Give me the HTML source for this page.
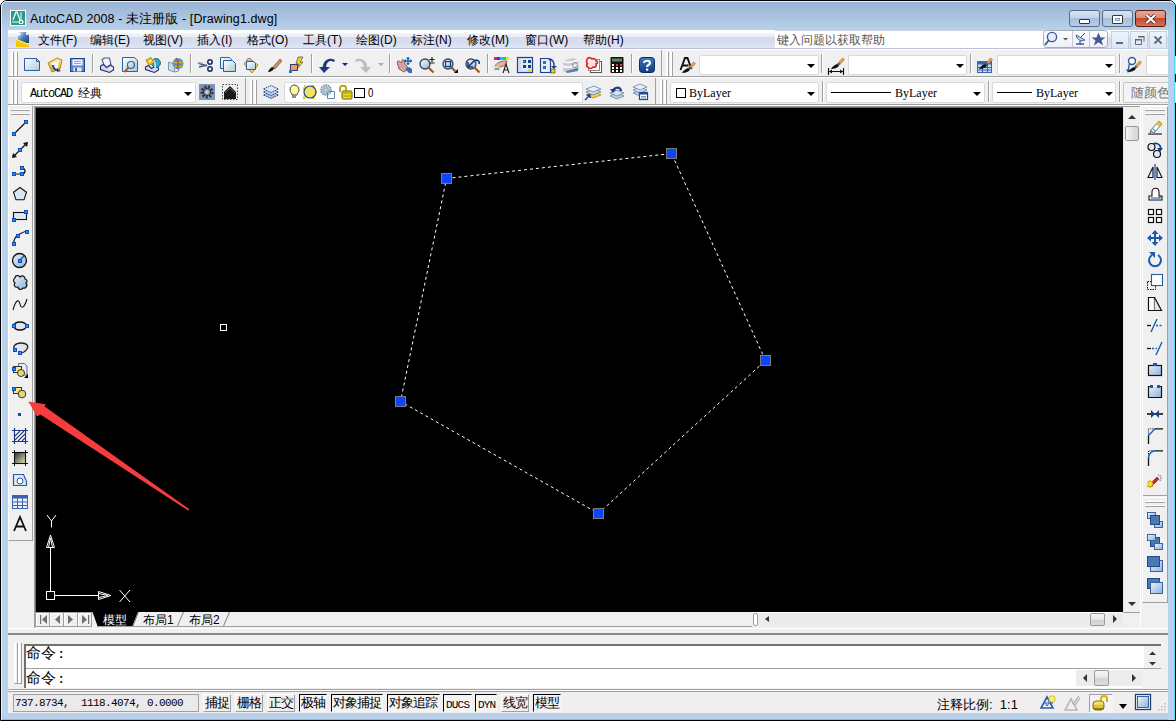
<!DOCTYPE html>
<html><head><meta charset="utf-8">
<style>
*{margin:0;padding:0;box-sizing:border-box}
html,body{width:1176px;height:721px;overflow:hidden;background:#fff}
body{position:relative;font-family:"Liberation Sans",sans-serif;font-size:12px;color:#000}
.a{position:absolute}
svg{position:absolute;overflow:visible}
#frame{left:0;top:0;width:1176px;height:721px;background:#b9d1ea;border:1px solid #000;border-radius:7px 7px 0 0}
#frame2{left:1px;top:1px;width:1174px;height:719px;border:1px solid #eaf2fb;border-right-color:#48d8f8;border-bottom-color:#48d8f8;border-radius:6px 6px 0 0}
#title{left:2px;top:2px;width:1172px;height:28px;border-radius:5px 5px 0 0;background:linear-gradient(#98b4d4,#b9d1ea)}
#client{left:8px;top:30px;width:1160px;height:683px;background:#f0f0f0}
#menubar{left:8px;top:30px;width:1160px;height:19px;background:linear-gradient(#fff 0,#fdfdfe 3px,#eef0f8 4px,#eef0f8 7px,#d6dcee 7px,#d8deef 13px,#e0e6f5 18px);border-bottom:1px solid #b9c0d8}
.ttl{left:30px;top:11px;font-size:12.5px;color:#000;white-space:pre;letter-spacing:0.1px}
.mi{top:32px;font-size:12px;white-space:pre}
.cap{top:10px;height:17px;border:1px solid #5a6d8a;border-radius:3px;background:linear-gradient(#d6e3f2 0,#c4d5ea 45%,#a9bfdb 50%,#b8cce6 100%)}
.mdi{top:30px;width:18px;height:18px;border:1px solid #b6c8de;background:linear-gradient(#f2f6fb,#dde7f3)}
.tb{background:#f0f0f0}
.sepv{width:2px;border-left:1px solid #a0a0a0;border-right:1px solid #fff}
.grip{width:6px;border-left:1px solid #a0a0a0;border-right:1px solid #a0a0a0}
.combo{background:#fff;border:1px solid #d9d9d9;border-radius:2px}
.arr{width:0;height:0;border-left:4px solid transparent;border-right:4px solid transparent;border-top:4px solid #000}
.mono{font-family:"Liberation Mono",monospace}
#canvas{left:36px;top:108px;width:1087px;height:504px;background:#000}
.sb{font-size:13px;letter-spacing:-1px;white-space:pre;top:694px;height:18px;padding:0 0 0 1px;overflow:hidden;line-height:16px;background:#f4f4f4}
.up{border-top:1px solid #fff;border-left:1px solid #fff;border-right:1px solid #a0a0a0;border-bottom:1px solid #a0a0a0;background:#f0eeee!important}
.dn{border-top:1px solid #000;border-left:1px solid #000;border-right:1px solid #f4f4f4;border-bottom:1px solid #f4f4f4}
</style></head><body>
<div class="a" id="frame"></div>
<div class="a" id="frame2"></div>
<div class="a" id="title"></div>
<div class="a" id="client"></div>

<!-- title -->
<svg style="left:10px;top:10px" width="16" height="16" viewBox="0 0 16 16">
<rect x="0" y="0" width="16" height="16" fill="#fff"/><rect x="1" y="1" width="14" height="14" fill="#2a9a88"/>
<path d="M3 10L6 2h1l3 8" stroke="#e8f8f4" stroke-width="1.4" fill="none"/><path d="M2 12h12M11 2v12" stroke="#fff" stroke-width="1"/>
<rect x="9.5" y="10.5" width="3" height="3" fill="#2a9a88" stroke="#fff"/></svg>
<div class="a ttl">AutoCAD 2008 - 未注册版 - [Drawing1.dwg]</div>
<div class="a cap" style="left:1069px;width:31px"><div class="a" style="left:9px;top:8px;width:11px;height:5px;background:#fff;border:1px solid #333;border-radius:1px"></div></div>
<div class="a cap" style="left:1102px;width:31px"><div class="a" style="left:9px;top:4px;width:11px;height:9px;background:#fff;border:1px solid #333;border-radius:1px"><div class="a" style="left:2px;top:2px;width:5px;height:3px;border:1px solid #7da2ce;background:#cbdcf0"></div></div></div>
<div class="a cap" style="left:1135px;width:31px;border-color:#5c1a1a;background:linear-gradient(#e8a598 0,#d98a78 45%,#c44a2c 50%,#d0735a 100%)"><svg style="left:9px;top:3px" width="12" height="10" viewBox="0 0 12 10"><path d="M1.5 1l8.5 8M10 1L1.5 9" stroke="#4a1a14" stroke-width="3.6"/><path d="M1.5 1l8.5 8M10 1L1.5 9" stroke="#fff" stroke-width="2.2"/></svg></div>

<!-- menubar -->
<div class="a" id="menubar"></div>
<svg style="left:15px;top:31px" width="16" height="16" viewBox="0 0 16 16">
<defs><linearGradient id="gMi" x1="0" y1="0" x2="1" y2="1"><stop offset="0" stop-color="#d6e4f4"/><stop offset="0.5" stop-color="#4a7ab8"/><stop offset="1" stop-color="#1a3a70"/></linearGradient></defs>
<path d="M3 1h8l3 3v8H3z" fill="url(#gMi)"/><path d="M11 1l3 3h-3z" fill="#e8eef8"/>
<path d="M1 8l13 5v3H1z" fill="#f5c800"/><path d="M1 8l13 5v1L1 9z" fill="#fff3a0"/>
<circle cx="4" cy="3" r="1.6" fill="#fff"/></svg>
<div class="a mi" style="left:38px">文件(F)</div>
<div class="a mi" style="left:90px">编辑(E)</div>
<div class="a mi" style="left:143px">视图(V)</div>
<div class="a mi" style="left:197px">插入(I)</div>
<div class="a mi" style="left:247px">格式(O)</div>
<div class="a mi" style="left:303px">工具(T)</div>
<div class="a mi" style="left:356px">绘图(D)</div>
<div class="a mi" style="left:411px">标注(N)</div>
<div class="a mi" style="left:467px">修改(M)</div>
<div class="a mi" style="left:525px">窗口(W)</div>
<div class="a mi" style="left:583px">帮助(H)</div>
<!-- help box -->
<div class="a" style="left:775px;top:30px;width:270px;height:18px;background:#fff;border-top:1px solid #c9d3e4"></div>
<div class="a mi" style="left:777px;top:32px;color:#555;font-size:12px">键入问题以获取帮助</div>
<svg style="left:1043px;top:30px" width="124" height="19" viewBox="0 0 124 19">
<defs><linearGradient id="gHb" x1="0" y1="0" x2="0" y2="1"><stop offset="0" stop-color="#fdfdfe"/><stop offset="1" stop-color="#eef0f5"/></linearGradient>
<linearGradient id="gMdi" x1="0" y1="0" x2="0" y2="1"><stop offset="0" stop-color="#eef4fb"/><stop offset="1" stop-color="#dce6f2"/></linearGradient></defs>
<rect x="0.5" y="0.5" width="64" height="17" rx="3" fill="url(#gHb)" stroke="#a6acb6"/>
<path d="M29.5 1v16M46.5 1v16" stroke="#c4c8d0"/>
<circle cx="9" cy="7" r="4.6" fill="#e8eef8" stroke="#3a5aa0" stroke-width="1.4"/><path d="M6 10l-4 5" stroke="#3a5aa0" stroke-width="2"/>
<path d="M20 8h5l-2.5 2.5z" fill="#555"/>
<path d="M33 14h8M37 14v-3" stroke="#3a5aa0" stroke-width="1.3"/><path d="M33 5c1 5 5 7 9 5z" fill="#c8d6ea" stroke="#3a5aa0" stroke-width="1"/><path d="M38 7l4-4" stroke="#3a5aa0"/>
<path d="M55.5 2.5l2 5h5l-4 3 1.6 5-4.6-3.2-4.6 3.2 1.6-5-4-3h5z" fill="#3f5a96"/>
<rect x="68.5" y="1.5" width="17" height="17" fill="url(#gMdi)" stroke="#c0d0e2"/>
<rect x="87.5" y="1.5" width="17" height="17" fill="url(#gMdi)" stroke="#c0d0e2"/>
<rect x="106.5" y="1.5" width="17" height="17" fill="url(#gMdi)" stroke="#c0d0e2"/>
<rect x="73" y="12" width="7" height="2" fill="#606a78"/>
<path d="M92.5 9.5h6v5h-6z" fill="none" stroke="#606a78"/><path d="M92 9h7v1.5h-7z" fill="#606a78"/><path d="M95 6.5h6v5" fill="none" stroke="#606a78"/><path d="M95 6h6.5v1.5H95z" fill="#606a78"/>
<path d="M111.5 6.5l7 7M118.5 6.5l-7 7" stroke="#606a78" stroke-width="1.8"/>
</svg>
<!-- toolbar rows -->
<div class="a" style="left:8px;top:49px;width:1160px;height:1px;background:#fff"></div>
<div class="a" style="left:8px;top:76px;width:1160px;height:1px;background:#a0a0a0"></div>
<div class="a" style="left:8px;top:77px;width:1160px;height:1px;background:#fff"></div>
<div class="a" style="left:8px;top:104px;width:1160px;height:1px;background:#a0a0a0"></div>
<div class="a" style="left:8px;top:105px;width:1160px;height:1px;background:#fff"></div>
<!-- row1 grips/separators -->
<svg style="left:11px;top:52px" width="8" height="24"><path d="M0.5 0v24M1.5 0v24M4.5 0v24M5.5 0v24" stroke="#fff"/><path d="M2.5 0v24M6.5 0v24" stroke="#a0a0a0"/></svg>
<div class="a sepv" style="left:92px;top:54px;height:19px"></div>
<div class="a sepv" style="left:190px;top:54px;height:19px"></div>
<div class="a sepv" style="left:311px;top:54px;height:19px"></div>
<div class="a sepv" style="left:389px;top:54px;height:19px"></div>
<div class="a sepv" style="left:487px;top:54px;height:19px"></div>
<div class="a sepv" style="left:631px;top:54px;height:19px"></div>
<div class="a" style="left:661px;top:50px;width:1px;height:26px;background:#a0a0a0"></div>
<svg style="left:666px;top:52px" width="8" height="24"><path d="M0.5 0v24M1.5 0v24M4.5 0v24M5.5 0v24" stroke="#fff"/><path d="M2.5 0v24M6.5 0v24" stroke="#a0a0a0"/></svg>
<div class="a combo" style="left:699px;top:55px;width:120px;height:20px"></div><div class="a arr" style="left:807px;top:64px"></div>
<div class="a sepv" style="left:821px;top:54px;height:19px"></div>
<div class="a combo" style="left:848px;top:55px;width:119px;height:20px"></div><div class="a arr" style="left:956px;top:64px"></div>
<div class="a sepv" style="left:970px;top:54px;height:19px"></div>
<div class="a combo" style="left:997px;top:55px;width:119px;height:20px"></div><div class="a arr" style="left:1105px;top:64px"></div>
<div class="a sepv" style="left:1119px;top:54px;height:19px"></div>
<div class="a combo" style="left:1146px;top:55px;width:30px;height:20px"></div>

<!-- row2 -->
<svg style="left:11px;top:80px" width="8" height="24"><path d="M0.5 0v24M1.5 0v24M4.5 0v24M5.5 0v24" stroke="#fff"/><path d="M2.5 0v24M6.5 0v24" stroke="#a0a0a0"/></svg>
<div class="a combo" style="left:21px;top:82px;width:175px;height:21px"></div>
<div class="a mono" style="left:30px;top:85px;font-size:12px;white-space:pre;letter-spacing:-1.2px">AutoCAD <span style="letter-spacing:0;font-family:'Liberation Sans'">经典</span></div>
<div class="a arr" style="left:184px;top:92px"></div>
<div class="a" style="left:245px;top:78px;width:1px;height:26px;background:#a0a0a0"></div>
<svg style="left:250px;top:80px" width="8" height="24"><path d="M0.5 0v24M1.5 0v24M4.5 0v24M5.5 0v24" stroke="#fff"/><path d="M2.5 0v24M6.5 0v24" stroke="#a0a0a0"/></svg>
<div class="a combo" style="left:284px;top:82px;width:299px;height:21px"></div>
<div class="a arr" style="left:571px;top:92px"></div>
<div class="a" style="left:655px;top:78px;width:1px;height:26px;background:#a0a0a0"></div>
<svg style="left:660px;top:80px" width="8" height="24"><path d="M0.5 0v24M1.5 0v24M4.5 0v24M5.5 0v24" stroke="#fff"/><path d="M2.5 0v24M6.5 0v24" stroke="#a0a0a0"/></svg>
<div class="a combo" style="left:670px;top:82px;width:149px;height:21px"></div>
<div class="a" style="left:676px;top:88px;width:10px;height:10px;border:1px solid #000;background:#fff"></div>
<div class="a" style="left:689px;top:86px;font-family:'Liberation Serif',serif;font-size:12px;white-space:pre">ByLayer</div>
<div class="a arr" style="left:807px;top:92px"></div>
<div class="a sepv" style="left:822px;top:81px;height:21px"></div>
<div class="a combo" style="left:826px;top:82px;width:159px;height:21px"></div>
<div class="a" style="left:831px;top:92px;width:60px;height:1px;background:#000"></div>
<div class="a" style="left:895px;top:86px;font-family:'Liberation Serif',serif;font-size:12px;white-space:pre">ByLayer</div>
<div class="a arr" style="left:973px;top:92px"></div>
<div class="a sepv" style="left:988px;top:81px;height:21px"></div>
<div class="a combo" style="left:992px;top:82px;width:124px;height:21px"></div>
<div class="a" style="left:997px;top:92px;width:35px;height:1px;background:#000"></div>
<div class="a" style="left:1036px;top:86px;font-family:'Liberation Serif',serif;font-size:12px;white-space:pre">ByLayer</div>
<div class="a arr" style="left:1105px;top:92px"></div>
<div class="a sepv" style="left:1119px;top:81px;height:21px"></div>
<div class="a" style="left:1123px;top:82px;width:55px;height:21px;background:#f4f4f4;border:1px solid #c8c8c8;border-radius:2px"></div>
<div class="a" style="left:1131px;top:84px;font-size:13px;color:#777;white-space:pre">随颜色</div>

<div class="a" style="left:1168px;top:30px;width:7px;height:690px;background:#b9d1ea;border-right:1px solid #48d8f8"></div>
<!-- canvas border -->
<div class="a" style="left:34px;top:106px;width:1106px;height:1px;background:#a0a0a0"></div>
<div class="a" style="left:35px;top:107px;width:1105px;height:1px;background:#696969"></div>
<div class="a" id="canvas"></div>

<!-- left toolbar -->
<div class="a" style="left:8px;top:105px;width:25px;height:436px;background:#f0f0f0;border-right:1px solid #a0a0a0;border-bottom:1px solid #a0a0a0;border-left:1px solid #fff;border-top:1px solid #fff"></div>
<svg style="left:11px;top:108px" width="20" height="8"><path d="M0 2.5h19M0 6.5h19" stroke="#a0a0a0"/><path d="M0 1.5h19M19.5 1v2M0 5.5h19M19.5 5v2" stroke="#fff"/></svg>
<div class="a" style="left:34px;top:106px;width:1px;height:522px;background:#a0a0a0"></div><div class="a" style="left:35px;top:107px;width:1px;height:520px;background:#696969"></div>

<!-- vscroll -->
<div class="a" style="left:1123px;top:107px;width:17px;height:505px;background:#f0f0f0;border-left:1px solid #e3e3e3"></div>
<div class="a" style="left:1128px;top:115px;width:0;height:0;border-left:4px solid transparent;border-right:4px solid transparent;border-bottom:4px solid #333"></div>
<div class="a" style="left:1125px;top:126px;width:14px;height:15px;border:1px solid #999;border-radius:2px;background:linear-gradient(90deg,#f6f6f6,#e2e2e2 50%,#d4d4d4)"></div>
<div class="a" style="left:1128px;top:602px;width:0;height:0;border-left:4px solid transparent;border-right:4px solid transparent;border-top:4px solid #333"></div>
<div class="a" style="left:1123px;top:612px;width:17px;height:1px;background:#a0a0a0"></div>
<div class="a" style="left:1140px;top:106px;width:1px;height:522px;background:#fff"></div>
<div class="a" style="left:1123px;top:627px;width:17px;height:1px;background:#fff"></div>

<!-- right toolbar -->
<div class="a" style="left:1142px;top:106px;width:26px;height:497px;background:#f0f0f0;border-left:1px solid #fff;border-top:1px solid #fff;border-right:1px solid #a0a0a0;border-bottom:1px solid #a0a0a0"></div>
<svg style="left:1145px;top:108px" width="21" height="8"><path d="M0 2.5h20M0 6.5h20" stroke="#a0a0a0"/><path d="M0 1.5h20M0 5.5h20" stroke="#fff"/></svg>
<div class="a" style="left:1143px;top:495px;width:24px;height:1px;background:#a0a0a0"></div><div class="a" style="left:1143px;top:497px;width:24px;height:1px;background:#fff"></div>
<svg style="left:1145px;top:500px" width="21" height="8"><path d="M0 2.5h20M0 6.5h20" stroke="#a0a0a0"/><path d="M0 1.5h20M0 5.5h20" stroke="#fff"/></svg>

<!-- tab row -->
<div class="a" style="left:35px;top:612px;width:1105px;height:16px;background:#f0f0f0"></div><div class="a" style="left:97px;top:626px;width:655px;height:1px;background:#a0a0a0"></div>
<div class="a" style="left:752px;top:612px;width:371px;height:1px;background:#fff"></div><div class="a" style="left:758px;top:613px;width:365px;height:13px;background:#ebebeb"></div><div class="a" style="left:753px;top:613px;width:5px;height:13px;border:1px solid #9aa0a8;border-radius:2px;background:#fff"></div>
<div class="a" style="left:765px;top:616px;width:0;height:0;border-top:3.5px solid transparent;border-bottom:3.5px solid transparent;border-right:4px solid #333"></div>
<div class="a" style="left:1090px;top:613px;width:15px;height:13px;border:1px solid #999;border-radius:2px;background:linear-gradient(#f6f6f6,#e6e6e6 50%,#d2d2d2 55%,#dadada)"></div>
<div class="a" style="left:1113px;top:615px;width:0;height:0;border-top:4px solid transparent;border-bottom:4px solid transparent;border-left:4px solid #333"></div>

<!-- separator above cmd -->
<div class="a" style="left:8px;top:628px;width:1160px;height:1px;background:#fff"></div>
<div class="a" style="left:8px;top:633px;width:1160px;height:2px;background:#8a8a8a"></div>

<!-- command line -->
<svg style="left:14px;top:643px" width="9" height="41"><path d="M0.5 0v40M1.5 0v40M4.5 0v40M5.5 0v40" stroke="#fff"/><path d="M3.5 0v40M7.5 0v40M0 40.5h8" stroke="#a0a0a0"/></svg>
<div class="a" style="left:24px;top:644px;width:1137px;height:44px;background:#fff;border-left:2px solid #707070;border-top:2px solid #707070"></div>
<div class="a" style="left:26px;top:668px;width:1135px;height:1px;background:#a0a0a0"></div>
<div class="a" style="left:26px;top:644px;font-size:15px;white-space:pre">命令<b style="font-size:13px;margin-left:3px">:</b></div>
<div class="a" style="left:26px;top:669px;font-size:15px;white-space:pre">命令<b style="font-size:13px;margin-left:3px">:</b></div>
<div class="a" style="left:1144px;top:646px;width:17px;height:22px;background:#f0f0f0"></div>
<div class="a" style="left:1076px;top:670px;width:66px;height:16px;background:#ececec"></div>
<div class="a" style="left:1142px;top:669px;width:19px;height:19px;background:#f0f0f0"></div>
<svg style="left:1070px;top:646px" width="91" height="42"><path d="M79 9l3.5-3.5 3.5 3.5z" fill="#333"/><path d="M79 16l3.5 3.5 3.5-3.5z" fill="#333"/><path d="M13 32l4-4v8z" fill="#333"/><path d="M62 28l4 4-4 4z" fill="#333"/></svg>
<div class="a" style="left:1094px;top:670px;width:15px;height:16px;border:1px solid #999;border-radius:2px;background:linear-gradient(#f6f6f6,#e8e8e8 45%,#d4d4d4 55%,#dcdcdc)"></div>
<!-- status bar -->
<div class="a" style="left:8px;top:689px;width:1160px;height:1px;background:#a0a0a0"></div>
<div class="a" style="left:8px;top:690px;width:1160px;height:1px;background:#fff"></div>
<div class="a" style="left:8px;top:691px;width:1160px;height:1px;background:#a0a0a0"></div>
<div class="a" style="left:8px;top:692px;width:1160px;height:21px;background:#f0eeee"></div>
<div class="a" style="left:13px;top:694px;width:186px;height:18px;border:1px solid #a0a0a0;background:#ebe9e9"></div>
<div class="a mono" style="left:15px;top:697px;font-size:11px;white-space:pre;letter-spacing:-0.6px">737.8734,  1118.4074, 0.0000</div>

<!-- canvas drawing -->
<svg style="left:0;top:0" width="1176" height="721" viewBox="0 0 1176 721">
<polygon points="446.5,178.5 671.5,153.5 765.5,360.5 598.5,513.5 400.5,401.5" fill="none" stroke="#fff" stroke-width="1" stroke-dasharray="3 3"/>
<rect x="441.5" y="173.5" width="10" height="10" fill="#0a46ff" stroke="#7a7a7a"/>
<rect x="666.5" y="148.5" width="10" height="10" fill="#0a46ff" stroke="#7a7a7a"/>
<rect x="760.5" y="355.5" width="10" height="10" fill="#0a46ff" stroke="#7a7a7a"/>
<rect x="593.5" y="508.5" width="10" height="10" fill="#0a46ff" stroke="#7a7a7a"/>
<rect x="395.5" y="396.5" width="10" height="10" fill="#0a46ff" stroke="#7a7a7a"/>
<rect x="220.5" y="324.5" width="6" height="6" fill="none" stroke="#fff"/>
<g stroke="#fff" stroke-width="1" fill="none">
<rect x="46.5" y="591.5" width="8" height="8"/>
<path d="M50.5 591V547.5M55 595.5H98.5"/>
<path d="M46.5 547.5h8L50.5 535zM48.5 547.5L50.5 538 52.5 547.5"/>
<path d="M98.5 591.5v8L111 595.5zM98.5 593.5L108 595.5 98.5 597.5"/>
<path d="M47 515l4.5 6 4.5-6M51.5 521v6.5"/>
<path d="M119.5 590l10.5 12M130 590l-10.5 12"/>
</g>
<polygon points="28.3,401.4 45.8,404.2 44.6,406.5 189.4,509.2 188.2,510.6 40.4,414.4 37.2,416.4" fill="#f63c3c"/>
</svg>

<!-- tabs -->
<svg style="left:35px;top:612px" width="200" height="16" viewBox="0 0 200 16">
<g fill="#f0f0f0" stroke="#a0a0a0">
<rect x="0.5" y="0.5" width="14" height="14"/><rect x="14.5" y="0.5" width="14" height="14"/><rect x="28.5" y="0.5" width="14" height="14"/><rect x="42.5" y="0.5" width="14" height="14"/>
</g>
<g fill="none" stroke="#fff"><path d="M1.5 13.5v-12h12M15.5 13.5v-12h12M29.5 13.5v-12h12M43.5 13.5v-12h12"/></g>
<g fill="#707070"><rect x="5" y="3" width="1.2" height="9"/><path d="M12 3v9L7 7.5z"/><path d="M25 3v9L20 7.5z"/><path d="M33 3v9l5-4.5z"/><path d="M47 3v9l5-4.5z"/><rect x="53" y="3" width="1.2" height="9"/></g>
<path d="M57.5 0h45.5l-5.5 14H62.5z" fill="#000"/>
<path d="M98 14l5.5-14M142.5 14l6-14M188.5 14l6-14" stroke="#808080" fill="none"/>

</svg>
<div class="a" style="left:103px;top:612px;font-size:12px;color:#fff;white-space:pre">模型</div>
<div class="a" style="left:143px;top:612px;font-size:12px;white-space:pre">布局1</div>
<div class="a" style="left:189px;top:612px;font-size:12px;white-space:pre">布局2</div>

<!-- status buttons -->
<div class="a sb up" style="left:203px;width:28px">捕捉</div>
<div class="a sb up" style="left:235px;width:28px">栅格</div>
<div class="a sb up" style="left:267px;width:28px">正交</div>
<div class="a sb dn" style="left:299px;width:28px">极轴</div>
<div class="a sb dn" style="left:331px;width:52px">对象捕捉</div>
<div class="a sb dn" style="left:387px;width:53px">对象追踪</div>
<div class="a sb dn mono" style="left:443px;width:29px;font-size:11px;letter-spacing:-0.8px;padding-left:2px;padding-top:2px">DUCS</div>
<div class="a sb dn mono" style="left:475px;width:22px;font-size:11px;letter-spacing:-0.8px;padding-left:2px;padding-top:2px">DYN</div>
<div class="a sb up" style="left:501px;width:28px">线宽</div>
<div class="a sb dn" style="left:533px;width:28px">模型</div>
<div class="a" style="left:937px;top:696px;font-size:13px;white-space:pre">注释比例:  1:1</div>
<svg style="left:1040px;top:693px" width="128" height="20" viewBox="0 0 128 20">
<defs><linearGradient id="gCs" x1="0" y1="0" x2="1" y2="1"><stop offset="0" stop-color="#f0f6fc"/><stop offset="1" stop-color="#8cb0d8"/></linearGradient>
<linearGradient id="gLk" x1="0" y1="0" x2="0" y2="1"><stop offset="0" stop-color="#fff280"/><stop offset="0.5" stop-color="#e0c010"/><stop offset="1" stop-color="#806800"/></linearGradient></defs>
<path d="M7 4l6 11H1z" fill="none" stroke="#2a5ab0" stroke-width="1.6"/><path d="M5 10h4l-2 3z" fill="#fff" stroke="#2a5ab0" stroke-width="1"/>
<circle cx="12" cy="6" r="3.2" fill="#fff070" stroke="#c8a800" stroke-width="0.7"/><rect x="11" y="9" width="2" height="2" fill="#888"/>
<path d="M31 6l6 11h-12z" fill="none" stroke="#b8b8b8" stroke-width="1.6"/><path d="M33 11l6-8M35 12l5-7" stroke="#a8a8a8" stroke-width="1.2"/>
<path d="M49.5 19V1.5H72" fill="none" stroke="#a0a0a0"/><rect x="50" y="2" width="23" height="18" fill="#f4f4f4"/>
<path d="M61 9V6c0-4 6-4 6 0v3" fill="none" stroke="#d8b400" stroke-width="2"/>
<rect x="53" y="8" width="11" height="9" rx="3" fill="url(#gLk)" stroke="#6a5500" stroke-width="0.8"/><path d="M54 11h9M54 14h9" stroke="#fff8a0" stroke-width="0.8"/>
<path d="M79 11h8l-4 5z" fill="#000"/>
<rect x="95.5" y="1.5" width="15" height="15" fill="#fff" stroke="#1a3f7a" stroke-width="1.3"/><rect x="97.5" y="3.5" width="11" height="11" fill="url(#gCs)" stroke="#1a3f7a" stroke-width="0.8"/>
<g fill="#b8b8b8"><rect x="124" y="10" width="1.5" height="1.5"/><rect x="121" y="13" width="1.5" height="1.5"/><rect x="124" y="13" width="1.5" height="1.5"/><rect x="118" y="16" width="1.5" height="1.5"/><rect x="121" y="16" width="1.5" height="1.5"/><rect x="124" y="16" width="1.5" height="1.5"/></g>
</svg>
<!-- layer combo extras -->
<div class="a" style="left:354px;top:88px;width:11px;height:10px;border:1px solid #000;background:#fff"></div>
<div class="a" style="left:368px;top:86px;font-size:12px;transform:scaleX(0.8);transform-origin:left">0</div>
<div class="a" style="left:1123px;top:612px;width:17px;height:1px;background:#a0a0a0"></div>
<svg width="0" height="0" style="position:absolute"><defs>
<linearGradient id="gDoc" x1="0" y1="0" x2="1" y2="1"><stop offset="0" stop-color="#ffffff"/><stop offset="1" stop-color="#a9cbd6"/></linearGradient>
<linearGradient id="gYel" x1="0" y1="0" x2="0" y2="1"><stop offset="0" stop-color="#fde58a"/><stop offset="1" stop-color="#d9a514"/></linearGradient>
<linearGradient id="gBlue" x1="0" y1="0" x2="1" y2="1"><stop offset="0" stop-color="#b9d3ef"/><stop offset="1" stop-color="#3d6fb0"/></linearGradient>
<linearGradient id="gLens" x1="0" y1="0" x2="1" y2="1"><stop offset="0" stop-color="#ffffff"/><stop offset="1" stop-color="#8fb4d6"/></linearGradient>
<linearGradient id="gHelp" x1="0" y1="0" x2="0" y2="1"><stop offset="0" stop-color="#3f78c0"/><stop offset="1" stop-color="#0f3c80"/></linearGradient>
<linearGradient id="gSq" x1="0" y1="0" x2="1" y2="1"><stop offset="0" stop-color="#e9f1fa"/><stop offset="1" stop-color="#8db2d9"/></linearGradient>
<linearGradient id="gDraw" x1="0" y1="0" x2="1" y2="1"><stop offset="0" stop-color="#7aa3d2"/><stop offset="1" stop-color="#2f5d9a"/></linearGradient>
</defs></svg>
<svg style="left:24px;top:57px" width="16" height="16" viewBox="0 0 16 16"><path d="M0.5 1.5h12l3 3v9h-15z" fill="url(#gDoc)" stroke="#2b5ea8"/><path d="M12.5 1.5v3h3" fill="none" stroke="#2b5ea8"/></svg>
<svg style="left:47px;top:57px" width="16" height="16" viewBox="0 0 16 16"><path d="M1 6l9-5 5 2-2 9-8 3z" fill="url(#gYel)" stroke="#b58b1c"/><path d="M4 6l8-3-1 8-5 2z" fill="#eef4fb"/><path d="M6 8c0 3 2 5 5 5" stroke="#1f4b8f" stroke-width="2" fill="none"/><path d="M10 11l4 3-4 1z" fill="#1f4b8f"/></svg>
<svg style="left:70px;top:57px" width="16" height="16" viewBox="0 0 16 16"><rect x="0.5" y="1.5" width="14" height="13" fill="#5a8ad4" stroke="#1f4790"/><rect x="2.5" y="2.5" width="10" height="6" fill="#f4f7fc"/><rect x="4" y="4" width="7" height="1" fill="#8fa8d0"/><rect x="4" y="6" width="7" height="1" fill="#8fa8d0"/><rect x="3.5" y="10.5" width="8" height="4" fill="#e6edf7"/><rect x="5" y="11" width="2" height="3.5" fill="#3a64a8"/></svg>
<svg style="left:100px;top:57px" width="16" height="16" viewBox="0 0 16 16"><path d="M2 2.5l2.5-1.5h5l1.5 7-4 3-3-2.5z" fill="#f2f2fa" stroke="#50508a" stroke-width="1.1"/><path d="M0.5 9l3-1.5 3 3 4-2.5 3 2v3l-4 2.5-9-3z" fill="#d4d8f0" stroke="#2a2a6a" stroke-width="1.1"/><path d="M9 12.5l4-1.5" stroke="#fff"/></svg>
<svg style="left:122px;top:57px" width="16" height="16" viewBox="0 0 16 16"><path d="M0.5 0.5h12l3 3v11h-15z" fill="url(#gDoc)" stroke="#2b5ea8"/><circle cx="9" cy="8" r="3.5" fill="url(#gLens)" stroke="#3d5f8f" stroke-width="1.2"/><path d="M6.5 10.5L2.5 15" stroke="#a0602a" stroke-width="2"/></svg>
<svg style="left:145px;top:57px" width="16" height="16" viewBox="0 0 16 16"><path d="M0.5 10l3-1.5 3 3 4-2.5 3 2v2l-4 2.5-9-3z" fill="#d4d8f0" stroke="#2a2a6a" stroke-width="1.1"/><circle cx="11" cy="6" r="4.5" fill="#3aa0d8" stroke="#1a5a40" stroke-width="0.8"/><path d="M8 3c2 2 3 4 2 8" stroke="#e8f4fa" stroke-width="1.2" fill="none"/><path d="M1 3l5-2.5 3 5-5 3z" fill="#f5c818" stroke="#9a7a00" stroke-width="0.8"/><path d="M4 4l1 1 1-2" stroke="#fff" fill="none"/></svg>
<svg style="left:168px;top:57px" width="16" height="16" viewBox="0 0 16 16"><path d="M0.5 5l6 2v8l-6-2z" fill="#cfdcec" stroke="#7f95b8"/><path d="M6.5 7l4-1v8l-4 1z" fill="#e5edf7" stroke="#7f95b8"/><circle cx="10" cy="6.5" r="5.5" fill="#3aa0d8"/><path d="M5 5c3 1 7 1 10 0M6 10c3-1 6-1 9 0" stroke="#e8b000" stroke-width="1.2" fill="none"/><path d="M8 1c2 3 3 7 1 11" stroke="#d8322a" stroke-width="1.2" fill="none"/></svg>
<svg style="left:197px;top:57px" width="16" height="16" viewBox="0 0 16 16"><path d="M1 6l9 3M2 10l8-2" stroke="#4a5a80" stroke-width="1.5"/><circle cx="13" cy="5" r="2.2" fill="none" stroke="#1a2a60" stroke-width="1.5"/><circle cx="13" cy="12" r="2.2" fill="none" stroke="#1a2a60" stroke-width="1.5"/><path d="M1 6l5 0" stroke="#9aa6c0"/></svg>
<svg style="left:220px;top:57px" width="16" height="16" viewBox="0 0 16 16"><path d="M0.5 0.5h9l2 2v9h-11z" fill="url(#gDoc)" stroke="#2b5ea8"/><path d="M3.5 3.5h9l3 3v8h-12z" fill="url(#gDoc)" stroke="#2b5ea8"/></svg>
<svg style="left:243px;top:57px" width="16" height="16" viewBox="0 0 16 16"><path d="M1 7l5-6 9 7-6 8z" fill="#f3d77a" stroke="#b08a20"/><path d="M4 2h4v2H4z" fill="#fff" stroke="#888"/><path d="M3.5 4.5h7l2 2v6h-9z" fill="url(#gDoc)" stroke="#2b5ea8"/></svg>
<svg style="left:267px;top:57px" width="16" height="16" viewBox="0 0 16 16"><path d="M1 15c1-3 3-5 5-5l1 1c0 2-3 4-6 4z" fill="#1a1a1a"/><path d="M6 10l2 2 7-8-2-2z" fill="#c89060" stroke="#6a4020" stroke-width="0.6"/></svg>
<svg style="left:289px;top:57px" width="16" height="16" viewBox="0 0 16 16"><rect x="1.5" y="7.5" width="7" height="6" fill="#f59a60" stroke="#2a3f7a"/><path d="M9 0h5l-3 5h3l-6 7 2-5h-3z" fill="#f5d020" stroke="#333" stroke-width="0.6"/><rect x="0" y="13" width="3" height="3" fill="#1f6fd8"/></svg>
<svg style="left:319px;top:57px" width="16" height="16" viewBox="0 0 16 16"><path d="M3.8 10.5C3.8 3.5 10 -0.8 16 3.2L15 5C10.5 2.5 7.2 5.5 7.2 10.5z" fill="#1a3a78"/><path d="M0 10h11L5 16z" fill="#1a3a78"/></svg>
<svg style="left:342px;top:63px" width="6" height="3" viewBox="0 0 6 3"><path d="M0 0h6l-3 3z" fill="#10208a"/></svg>
<svg style="left:355px;top:57px" width="16" height="16" viewBox="0 0 16 16"><path d="M12.2 10.5C12.2 3.5 6 -0.8 0 3.2L1 5C5.5 2.5 8.8 5.5 8.8 10.5z" fill="#b8bcc4"/><path d="M16 10H5l6 6z" fill="#b8bcc4"/></svg>
<svg style="left:378px;top:63px" width="6" height="3" viewBox="0 0 6 3"><path d="M0 0h6l-3 3z" fill="#a8a8c0"/></svg>
<svg style="left:396px;top:57px" width="16" height="16" viewBox="0 0 16 16"><path d="M1 5c1-2 3-1 4 1l1-3c1-1 2 0 2 1l1 3 2 2 1 3-4 3-5-3z" fill="#d7a0a0" stroke="#804848" stroke-width="0.8"/><path d="M9 12l4 4h3v-4l-3-2z" fill="#2f6fb8"/><path d="M12 0v8M8 4h8" stroke="#1f5fa8" stroke-width="1.4"/><path d="M12 0l-2 2h4zM12 8l-2-2h4zM8 4l2-2v4zM16 4l-2-2v4z" fill="#1f5fa8"/></svg>
<svg style="left:419px;top:57px" width="16" height="16" viewBox="0 0 16 16"><circle cx="6" cy="7" r="5" fill="url(#gLens)" stroke="#33465c" stroke-width="1.3"/><path d="M9.5 10.5l5 5" stroke="#9a5a1a" stroke-width="2.2"/><path d="M13 0v5M10.5 2.5h5M10.5 6h5" stroke="#1a1a1a" stroke-width="1.1"/></svg>
<svg style="left:442px;top:57px" width="16" height="16" viewBox="0 0 16 16"><circle cx="6" cy="7" r="5" fill="url(#gLens)" stroke="#33465c" stroke-width="1.3"/><path d="M9.5 10.5l4 4" stroke="#9a5a1a" stroke-width="2.2"/><rect x="3.5" y="4.5" width="5" height="5" fill="none" stroke="#1a3a80" stroke-width="1.2"/><path d="M16 12v4h-4z" fill="#000"/></svg>
<svg style="left:465px;top:57px" width="16" height="16" viewBox="0 0 16 16"><circle cx="6" cy="7" r="5" fill="url(#gLens)" stroke="#33465c" stroke-width="1.3"/><path d="M9.5 10.5l5 5" stroke="#9a5a1a" stroke-width="2.2"/><path d="M4 9l5-5M3 5v5h5" stroke="#1a3a80" stroke-width="1.6" fill="none"/><path d="M9 4c3-2 6 0 5 3" stroke="#1a3a80" stroke-width="1.6" fill="none"/></svg>
<svg style="left:494px;top:57px" width="16" height="16" viewBox="0 0 16 16"><rect x="0" y="0" width="3" height="3" fill="#e0206a"/><rect x="3" y="0" width="3" height="3" fill="#6a20e0"/><rect x="6" y="0" width="3" height="3" fill="#20c0e0"/><rect x="9" y="0" width="3" height="3" fill="#20d040"/><rect x="12" y="0" width="3" height="3" fill="#f0e020"/><path d="M1 9c2-4 6-5 12-5l-1 4-5 2z" fill="#e0b0a0" stroke="#905050" stroke-width="0.8"/><rect x="0.5" y="8.5" width="5" height="2" fill="#e8d060"/><rect x="0.5" y="11" width="5" height="2" fill="#70a0d0"/><path d="M9 16l3-9 3 9M10 13h4" stroke="#222" stroke-width="1.1" fill="none"/></svg>
<svg style="left:517px;top:57px" width="16" height="16" viewBox="0 0 16 16"><rect x="0.5" y="0.5" width="15" height="15" fill="#dfeaf8" stroke="#1f3f8a" stroke-width="1.2"/><path d="M3 2v12" stroke="#c8a830" stroke-dasharray="1 1"/><rect x="6" y="3" width="3" height="3" fill="#1a4070"/><rect x="11" y="3" width="3" height="3" fill="#1a4070"/><rect x="6" y="8" width="3" height="3" fill="#1a4070"/><rect x="11" y="8" width="3" height="3" fill="#1a4070"/><rect x="11" y="12" width="3" height="3" fill="#f0d030"/><rect x="6" y="4" width="2" height="1" fill="#5ab"/></svg>
<svg style="left:540px;top:57px" width="16" height="16" viewBox="0 0 16 16"><path d="M0.5 1.5h8l2 2v12h-10z" fill="#e4ecf6" stroke="#1f3f8a" stroke-width="1.1"/><rect x="3" y="4" width="3" height="3" fill="#3a6ab0"/><rect x="3" y="9" width="3" height="3" fill="#3a6ab0"/><path d="M9 2c4 0 5 3 5 7" stroke="#1f3f8a" stroke-width="1.4" fill="none"/><path d="M11 9h6l-3 3z" fill="#1f3f8a"/><rect x="11" y="12" width="4" height="4" fill="#f0d030" stroke="#333" stroke-width="0.6"/></svg>
<svg style="left:563px;top:57px" width="16" height="16" viewBox="0 0 16 16"><path d="M0 4l10-3 6 2v10l-12 3-4-2z" fill="#c8ccd2"/><path d="M0 4c3 2 8 2 16-1M0 9c4 2 10 1 16-2" stroke="#f6f6f6" stroke-width="2" fill="none"/><circle cx="12" cy="8" r="2.5" fill="none" stroke="#8a9098"/><path d="M3 14l12-3v3l-11 2z" fill="#5a7ab0"/></svg>
<svg style="left:586px;top:57px" width="16" height="16" viewBox="0 0 16 16"><rect x="4.5" y="4.5" width="11" height="11" fill="#fff" stroke="#555"/><rect x="2.5" y="2.5" width="11" height="11" fill="#fff" stroke="#888"/><path d="M2 1c2-1 3 0 4 1 2-1 4 0 4 2 2 0 2 3 0 3 1 2-1 4-3 3-1 2-4 2-5 0-2 0-2-3 0-3-2-1-2-4 0-6z" fill="#f8e8e8" stroke="#e02020" stroke-width="1.6"/></svg>
<svg style="left:610px;top:57px" width="16" height="16" viewBox="0 0 16 16"><rect x="0.5" y="0" width="13" height="16" rx="1" fill="#111"/><rect x="2" y="1.5" width="10" height="3" fill="#5a8a5a"/><g fill="#fff"><rect x="2" y="7" width="2" height="2"/><rect x="6" y="7" width="2" height="2" fill="#f33"/><rect x="10" y="7" width="2" height="2" fill="#f33"/><rect x="2" y="10" width="2" height="2"/><rect x="6" y="10" width="2" height="2"/><rect x="10" y="10" width="2" height="2"/><rect x="2" y="13" width="2" height="2"/><rect x="6" y="13" width="2" height="2"/><rect x="10" y="13" width="2" height="2"/></g></svg>
<svg style="left:639px;top:57px" width="16" height="16" viewBox="0 0 16 16"><rect x="0.5" y="0.5" width="15" height="15" rx="3" fill="url(#gHelp)" stroke="#0a2a60"/><path d="M5 6c0-3 6-3 6 0 0 2-3 2-3 4" stroke="#fff" stroke-width="2.2" fill="none"/><rect x="7" y="11.5" width="2.2" height="2.2" fill="#fff"/></svg>
<svg style="left:679px;top:57px" width="16" height="16" viewBox="0 0 16 16"><path d="M1.5 13L6 1h2.5l4 11M3.5 8.5h6" stroke="#111" stroke-width="1.9" fill="none"/><g transform="translate(1 1)"><path d="M9.5 8.5l4-4.5 2 1.5-4 4.5z" fill="#e8a050" stroke="#a06020" stroke-width="0.5"/><path d="M8 10l1.5-1.5 2 1.5-1.5 1.5z" fill="#2a6a6a"/><path d="M2 15c1-2 3-4 6-5l2 1.5c-1 2-4 3.5-8 3.5z" fill="#111"/></g></svg>
<svg style="left:828px;top:57px" width="16" height="16" viewBox="0 0 16 16"><path d="M0 14.5h16M0.5 11v7M15.5 11v7" stroke="#111" stroke-width="1.2"/><path d="M1 14.5l3-2v4zM15 14.5l-3-2v4z" fill="#111"/><g transform="translate(1 -3)"><path d="M9.5 8.5l4-4.5 2 1.5-4 4.5z" fill="#e8a050" stroke="#a06020" stroke-width="0.5"/><path d="M8 10l1.5-1.5 2 1.5-1.5 1.5z" fill="#2a6a6a"/><path d="M2 15c1-2 3-4 6-5l2 1.5c-1 2-4 3.5-8 3.5z" fill="#111"/></g></svg>
<svg style="left:977px;top:57px" width="16" height="16" viewBox="0 0 16 16"><rect x="0.5" y="4.5" width="14" height="11" fill="#c8daf2" stroke="#3a64b0"/><rect x="0.5" y="4.5" width="14" height="3" fill="#3a64b0"/><path d="M0 10.5h15M0 13h15M5.5 7v9M10.5 7v9" stroke="#3a64b0"/><g transform="translate(0 -3)"><path d="M9.5 8.5l4-4.5 2 1.5-4 4.5z" fill="#e8a050" stroke="#a06020" stroke-width="0.5"/><path d="M8 10l1.5-1.5 2 1.5-1.5 1.5z" fill="#2a6a6a"/><path d="M2 15c1-2 3-4 6-5l2 1.5c-1 2-4 3.5-8 3.5z" fill="#111"/></g></svg>
<svg style="left:1126px;top:57px" width="16" height="16" viewBox="0 0 16 16"><circle cx="6" cy="4" r="3.5" fill="#fff" stroke="#2a5aa8" stroke-width="1.4"/><path d="M3.5 6.5L2 14" stroke="#2a5aa8" stroke-width="1.3"/><path d="M0 12.5l2 3.5 2-3.5z" fill="#2a5aa8"/><g transform="translate(0 0)"><path d="M9.5 8.5l4-4.5 2 1.5-4 4.5z" fill="#e8a050" stroke="#a06020" stroke-width="0.5"/><path d="M8 10l1.5-1.5 2 1.5-1.5 1.5z" fill="#2a6a6a"/><path d="M2 15c1-2 3-4 6-5l2 1.5c-1 2-4 3.5-8 3.5z" fill="#111"/></g></svg>
<svg style="left:199px;top:84px" width="16" height="16" viewBox="0 0 16 16"><rect x="0" y="0" width="16" height="16" fill="#7b95b9"/><circle cx="8" cy="8" r="5" fill="none" stroke="#333" stroke-width="3" stroke-dasharray="2 1.4"/><circle cx="8" cy="8" r="3.5" fill="#9aa8b8" stroke="#222"/><circle cx="8" cy="8" r="1.5" fill="#cfd8e2"/></svg>
<svg style="left:222px;top:84px" width="16" height="16" viewBox="0 0 16 16"><rect x="0.5" y="0.5" width="15" height="15" fill="none" stroke="#444" stroke-dasharray="1.5 1.5"/><path d="M2 8l6-6 6 6v7H2z" fill="#1a1a1a"/><path d="M3 9l5-5 5 5" stroke="#888" fill="none" stroke-width="0.6"/></svg>
<svg style="left:263px;top:84px" width="16" height="16" viewBox="0 0 16 16"><path d="M0.5 11l7.5-3.5 7.5 3.5-7.5 3.5z" fill="#a8c0e0" stroke="#2a4a8a" stroke-width="1" stroke-dasharray="1.6 0.8"/><path d="M0.5 8l7.5-3.5 7.5 3.5-7.5 3.5z" fill="#bcd0ea" stroke="#2a4a8a" stroke-width="1" stroke-dasharray="1.6 0.8"/><path d="M0.5 5l7.5-3.5 7.5 3.5-7.5 3.5z" fill="#d8e6f6" stroke="#2a4a8a" stroke-width="1" stroke-dasharray="1.6 0.8"/></svg>
<svg style="left:289px;top:84px" width="11" height="16" viewBox="0 0 11 16"><path d="M5 1c3 0 5 2 5 5 0 2-2 3-2 5H3c0-2-2-3-2-5 0-3 2-5 4-5z" fill="#fff6a0" stroke="#333" stroke-width="0.9"/><rect x="3" y="11" width="4" height="3" fill="#8090b0"/></svg>
<svg style="left:302px;top:84px" width="16" height="16" viewBox="0 0 16 16"><rect x="2" y="2" width="12" height="12" fill="none" stroke="#e8c800" stroke-width="2" stroke-dasharray="3 6" stroke-dashoffset="1.5"/><circle cx="8" cy="8" r="6" fill="#f5e060" stroke="#1a4a9a" stroke-width="1.2"/></svg>
<svg style="left:320px;top:84px" width="16" height="16" viewBox="0 0 16 16"><circle cx="6" cy="6" r="5.2" fill="#a8c4e4" stroke="#6a8ab8" stroke-width="1.2" stroke-dasharray="1.6 1"/><circle cx="6" cy="6" r="2.2" fill="#e0d080" stroke="#8a9ab0" stroke-width="0.6"/><path d="M8.5 7.5h6v7h-7v-6" fill="none" stroke="#6a80a0"/></svg>
<svg style="left:338px;top:84px" width="16" height="16" viewBox="0 0 16 16"><path d="M2 8V4c0-3 6-3 6 0v3" stroke="#bba010" stroke-width="1.8" fill="none"/><rect x="4" y="7" width="10" height="8" rx="1" fill="#f0e020" stroke="#706000"/><path d="M5 9h8M5 12h8" stroke="#a08a00"/></svg>
<svg style="left:585px;top:84px" width="16" height="16" viewBox="0 0 16 16"><path d="M1 11l8-3 7 3-8 3z" fill="#f0d840" stroke="#9a8020" stroke-width="0.7"/><path d="M1 8l8-3 7 3-8 3z" fill="#d0dcec" stroke="#5a7098" stroke-width="0.7"/><path d="M1 5l8-3 7 3-8 3z" fill="#e6eef8" stroke="#5a7098" stroke-width="0.7"/><path d="M0 16l5-5M2 11h3v3" stroke="#1a3f8a" stroke-width="1.4" fill="none"/></svg>
<svg style="left:609px;top:84px" width="16" height="16" viewBox="0 0 16 16"><path d="M1 12l7-3 7 3-7 3z" fill="#c0d0e6" stroke="#5a7098" stroke-width="0.7"/><path d="M1 9l7-3 7 3-7 3z" fill="#d6e0ee" stroke="#5a7098" stroke-width="0.7"/><path d="M4 8c0-5 8-6 8-1" stroke="#1a3f7a" stroke-width="2.2" fill="none"/><path d="M1 5h6l-3 4z" fill="#1a3f7a"/></svg>
<svg style="left:632px;top:84px" width="16" height="16" viewBox="0 0 16 16"><path d="M1 9l7-3 7 3-7 3z" fill="#c0d0e6" stroke="#5a7098" stroke-width="0.7"/><path d="M1 6l7-3 7 3-7 3z" fill="#d6e0ee" stroke="#5a7098" stroke-width="0.7"/><path d="M1 3l7-3 7 3-7 3z" fill="#e6eef8" stroke="#5a7098" stroke-width="0.7"/><rect x="7.5" y="8.5" width="8" height="7" fill="#fff" stroke="#1a4a9a" stroke-width="1.2"/><rect x="7.5" y="8.5" width="8" height="2" fill="#1a4a9a"/><path d="M9 12.5h5M9 14h5" stroke="#5a7ab0" stroke-width="0.8"/></svg>
<svg style="left:12px;top:120px" width="16" height="16" viewBox="0 0 16 16"><path d="M2 14L14 2" stroke="#111" stroke-width="1.2"/><rect x="0" y="12" width="4" height="4" fill="#0a4fc0" shape-rendering="crispEdges"/><rect x="1" y="13" width="2" height="2" fill="#2a8af8" shape-rendering="crispEdges"/><rect x="12" y="0" width="4" height="4" fill="#0a4fc0" shape-rendering="crispEdges"/><rect x="13" y="1" width="2" height="2" fill="#2a8af8" shape-rendering="crispEdges"/></svg>
<svg style="left:12px;top:142px" width="16" height="16" viewBox="0 0 16 16"><path d="M1 15L15 1" stroke="#111" stroke-width="1.2"/><path d="M0 16l1-5 4 4zM16 0l-5 1 4 4z" fill="#111"/><rect x="6" y="6" width="4" height="4" fill="#0a4fc0" shape-rendering="crispEdges"/><rect x="7" y="7" width="2" height="2" fill="#2a8af8" shape-rendering="crispEdges"/></svg>
<svg style="left:12px;top:164px" width="16" height="16" viewBox="0 0 16 16"><path d="M2 10h8M10 4c4 0 4 6 0 6" stroke="#111" stroke-width="1.2" fill="none"/><rect x="0" y="8" width="4" height="4" fill="#0a4fc0" shape-rendering="crispEdges"/><rect x="1" y="9" width="2" height="2" fill="#2a8af8" shape-rendering="crispEdges"/><rect x="8" y="8" width="4" height="4" fill="#0a4fc0" shape-rendering="crispEdges"/><rect x="9" y="9" width="2" height="2" fill="#2a8af8" shape-rendering="crispEdges"/><rect x="8" y="2" width="4" height="4" fill="#0a4fc0" shape-rendering="crispEdges"/><rect x="9" y="3" width="2" height="2" fill="#2a8af8" shape-rendering="crispEdges"/></svg>
<svg style="left:12px;top:186px" width="16" height="16" viewBox="0 0 16 16"><path d="M8 1.5l6.5 4.7-2.5 7.6H4L1.5 6.2z" fill="#d8e6f2" stroke="#111" stroke-width="1.1"/></svg>
<svg style="left:12px;top:208px" width="16" height="16" viewBox="0 0 16 16"><rect x="1.5" y="4.5" width="13" height="7" fill="#dde8f4" stroke="#111" stroke-width="1.1"/><rect x="12" y="2" width="4" height="4" fill="#0a4fc0" shape-rendering="crispEdges"/><rect x="13" y="3" width="2" height="2" fill="#2a8af8" shape-rendering="crispEdges"/><rect x="0" y="10" width="4" height="4" fill="#0a4fc0" shape-rendering="crispEdges"/><rect x="1" y="11" width="2" height="2" fill="#2a8af8" shape-rendering="crispEdges"/></svg>
<svg style="left:12px;top:230px" width="16" height="16" viewBox="0 0 16 16"><path d="M1.5 14C2 9 4 6 6 5s5-3 8.5-4" stroke="#111" stroke-width="1.2" fill="none"/><rect x="0" y="12" width="4" height="4" fill="#0a4fc0" shape-rendering="crispEdges"/><rect x="1" y="13" width="2" height="2" fill="#2a8af8" shape-rendering="crispEdges"/><rect x="4" y="4" width="4" height="4" fill="#0a4fc0" shape-rendering="crispEdges"/><rect x="5" y="5" width="2" height="2" fill="#2a8af8" shape-rendering="crispEdges"/><rect x="13" y="0" width="4" height="4" fill="#0a4fc0" shape-rendering="crispEdges"/><rect x="14" y="1" width="2" height="2" fill="#2a8af8" shape-rendering="crispEdges"/></svg>
<svg style="left:12px;top:252px" width="16" height="16" viewBox="0 0 16 16"><circle cx="7.5" cy="8.5" r="7" fill="url(#gSq)" stroke="#111" stroke-width="1.3"/><path d="M7.5 8.5l4.5-4.5" stroke="#1a4ab0" stroke-width="1.2"/><rect x="6" y="7" width="4" height="4" fill="#0a4fc0" shape-rendering="crispEdges"/><rect x="7" y="8" width="2" height="2" fill="#2a8af8" shape-rendering="crispEdges"/></svg>
<svg style="left:12px;top:274px" width="16" height="16" viewBox="0 0 16 16"><path d="M3 4c0-3 4-3 5-1 2-2 5-1 5 2 2 0 3 3 1 4 2 2 0 6-3 5-1 2-5 2-5-1-3 1-5-2-3-4-2-1-2-4 0-5z" fill="url(#gSq)" stroke="#111" stroke-width="1.2"/></svg>
<svg style="left:12px;top:296px" width="16" height="16" viewBox="0 0 16 16"><path d="M1 14C4 3 7 3 8 8s4 5 7-5" stroke="#111" stroke-width="1.1" fill="none"/></svg>
<svg style="left:12px;top:318px" width="16" height="16" viewBox="0 0 16 16"><ellipse cx="8" cy="8" rx="6.5" ry="4" fill="#dde8f4" stroke="#111" stroke-width="1.3"/><rect x="0" y="6" width="4" height="4" fill="#0a4fc0" shape-rendering="crispEdges"/><rect x="1" y="7" width="2" height="2" fill="#2a8af8" shape-rendering="crispEdges"/><rect x="13" y="6" width="4" height="4" fill="#0a4fc0" shape-rendering="crispEdges"/><rect x="14" y="7" width="2" height="2" fill="#2a8af8" shape-rendering="crispEdges"/></svg>
<svg style="left:12px;top:340px" width="16" height="16" viewBox="0 0 16 16"><path d="M3 10C0 7 3 3 9 3s8 3 6 6-5 4-7 4" stroke="#222" stroke-width="1.3" fill="#dde6f0"/><rect x="1" y="8" width="4" height="4" fill="#0a4fc0" shape-rendering="crispEdges"/><rect x="2" y="9" width="2" height="2" fill="#2a8af8" shape-rendering="crispEdges"/><rect x="6" y="11" width="4" height="4" fill="#0a4fc0" shape-rendering="crispEdges"/><rect x="7" y="12" width="2" height="2" fill="#2a8af8" shape-rendering="crispEdges"/></svg>
<svg style="left:12px;top:362px" width="16" height="16" viewBox="0 0 16 16"><path d="M6.5 1.5h6l2.5 2.5v9h-8.5z" fill="#e4ecf4" stroke="#50709a"/><rect x="1.5" y="4.5" width="8" height="6" fill="#f0e890" stroke="#333"/><circle cx="9" cy="11" r="3.5" fill="#e8d870" stroke="#333"/><path d="M16 12v4h-4z" fill="#000"/><rect x="0" y="5" width="4" height="4" fill="#0a4fc0" shape-rendering="crispEdges"/><rect x="1" y="6" width="2" height="2" fill="#2a8af8" shape-rendering="crispEdges"/></svg>
<svg style="left:12px;top:384px" width="16" height="16" viewBox="0 0 16 16"><rect x="1.5" y="3.5" width="8" height="6" fill="#f0e890" stroke="#333"/><circle cx="10" cy="10" r="3.8" fill="#e8d870" stroke="#333"/><rect x="0" y="3" width="4" height="4" fill="#0a4fc0" shape-rendering="crispEdges"/><rect x="1" y="4" width="2" height="2" fill="#2a8af8" shape-rendering="crispEdges"/></svg>
<svg style="left:12px;top:406px" width="16" height="16" viewBox="0 0 16 16"><rect x="6" y="7" width="3" height="3" fill="#1a4ab0"/></svg>
<svg style="left:12px;top:428px" width="16" height="16" viewBox="0 0 16 16"><rect x="3" y="3" width="10" height="10" fill="#fff"/><path d="M3 8l5-5M3 12l9-9M6 13l7-7M10 13l3-3" stroke="#1a3a7a" stroke-width="1.1"/><path d="M0 2.5h16M0 13.5h16M2.5 0v16M13.5 0v16" stroke="#1a3a7a" stroke-width="1.2"/></svg>
<svg style="left:12px;top:450px" width="16" height="16" viewBox="0 0 16 16"><defs><linearGradient id="gGr" x1="0" y1="0" x2="1" y2="1"><stop offset="0" stop-color="#203048"/><stop offset="1" stop-color="#e8e8a0"/></linearGradient></defs><rect x="2.5" y="2.5" width="11" height="11" fill="url(#gGr)" stroke="#111" stroke-width="1.1"/><path d="M0 2.5h16M0 13.5h16M2.5 0v16M13.5 0v16" stroke="#111" stroke-width="1"/></svg>
<svg style="left:12px;top:472px" width="16" height="16" viewBox="0 0 16 16"><path d="M1.5 2.5h10l3 7v4h-13z" fill="#dde8f4" stroke="#2a5aa8" stroke-width="1.2"/><circle cx="8" cy="9" r="3" fill="#fff" stroke="#2a5aa8"/></svg>
<svg style="left:12px;top:494px" width="16" height="16" viewBox="0 0 16 16"><rect x="0.5" y="1.5" width="15" height="13" fill="#e8f0fa" stroke="#3a64b0"/><rect x="0.5" y="1.5" width="15" height="3" fill="#3a64b0"/><path d="M0 8h16M0 11.5h16M5.5 4v11M10.5 4v11" stroke="#3a64b0"/></svg>
<svg style="left:12px;top:516px" width="16" height="16" viewBox="0 0 16 16"><path d="M2 15L8 1l6 14M4 10.5h8" stroke="#111" stroke-width="1.8" fill="none"/></svg>
<svg style="left:1147px;top:120px" width="16" height="16" viewBox="0 0 16 16"><path d="M1 14h14" stroke="#222" stroke-width="1.2"/><path d="M4 14l-1-3 9-10 3 3-9 10z" fill="#fff" stroke="#2a4a90" stroke-width="0.8"/><path d="M9 4l3 3 3-3-3-3z" fill="#f0c020"/><path d="M3 11l3 3 1-1-3-3z" fill="#e05050"/><path d="M5 9l3 3 1-1-3-3z" fill="#40b0b0"/></svg>
<svg style="left:1147px;top:142px" width="16" height="16" viewBox="0 0 16 16"><circle cx="4.5" cy="5" r="3.5" fill="#dfe8f4" stroke="#111" stroke-width="1.2"/><circle cx="10" cy="12" r="3.5" fill="#dfe8f4" stroke="#111" stroke-width="1.2"/><path d="M6 2c5-2 9 2 7 6" stroke="#1a3f8a" stroke-width="1.6" fill="none"/><path d="M10 6h6l-3 4z" fill="#1a3f8a"/></svg>
<svg style="left:1147px;top:164px" width="16" height="16" viewBox="0 0 16 16"><path d="M8 0v16" stroke="#1a5ad0" stroke-width="1.3"/><path d="M6 3v10.5H1z" fill="#e8eef6" stroke="#111" stroke-width="1.1"/><path d="M10 3v10.5h5z" fill="#e8eef6" stroke="#111" stroke-width="1.1"/></svg>
<svg style="left:1147px;top:186px" width="16" height="16" viewBox="0 0 16 16"><path d="M2 14V10h3V6c0-5 7-5 7 0v4h3v4z" fill="#fff" stroke="#111" stroke-width="1.1"/><path d="M4 12h9V9" stroke="#1a4ab0" stroke-width="1.2" fill="none"/></svg>
<svg style="left:1147px;top:208px" width="16" height="16" viewBox="0 0 16 16"><rect x="1.5" y="1.5" width="5" height="5" fill="#fff" stroke="#111" stroke-width="1.2"/><rect x="9.5" y="1.5" width="5" height="5" fill="#fff" stroke="#111" stroke-width="1.2"/><rect x="1.5" y="9.5" width="5" height="5" fill="#fff" stroke="#111" stroke-width="1.2"/><rect x="9.5" y="9.5" width="5" height="5" fill="#fff" stroke="#111" stroke-width="1.2"/></svg>
<svg style="left:1147px;top:230px" width="16" height="16" viewBox="0 0 16 16"><path d="M8 1v14M1 8h14" stroke="#1a5ab0" stroke-width="2"/><path d="M8 0l-3.5 4h7zM8 16l-3.5-4h7zM0 8l4-3.5v7zM16 8l-4-3.5v7z" fill="#1a5ab0"/></svg>
<svg style="left:1147px;top:252px" width="16" height="16" viewBox="0 0 16 16"><path d="M5 3A6 6 0 1 0 11 3" stroke="#1a5ab0" stroke-width="2" fill="none"/><path d="M2 0h6v6z" fill="#1a5ab0"/></svg>
<svg style="left:1147px;top:274px" width="16" height="16" viewBox="0 0 16 16"><rect x="0.5" y="7.5" width="8" height="8" fill="none" stroke="#111" stroke-dasharray="1.5 1"/><rect x="4.5" y="0.5" width="11" height="11" fill="#fff" stroke="#2a5aa8" stroke-width="1.1"/></svg>
<svg style="left:1147px;top:296px" width="16" height="16" viewBox="0 0 16 16"><path d="M1.5 1.5h6v13h-6z" fill="#fff" stroke="#111" stroke-width="1.2"/><path d="M7.5 1.5l7 13h-7" fill="#dde8f4" stroke="#111" stroke-width="1.2"/></svg>
<svg style="left:1147px;top:318px" width="16" height="16" viewBox="0 0 16 16"><path d="M0 7.5h4" stroke="#111" stroke-width="1.3"/><path d="M9 7.5h7" stroke="#1a5ab0" stroke-width="1.3" stroke-dasharray="2 1.5"/><path d="M4 14L10 1" stroke="#1a5ab0" stroke-width="1.4"/></svg>
<svg style="left:1147px;top:340px" width="16" height="16" viewBox="0 0 16 16"><path d="M0 8.5h4" stroke="#111" stroke-width="1.3"/><path d="M5 8.5h5" stroke="#1a5ab0" stroke-width="1.3" stroke-dasharray="2 1.5"/><path d="M9 15L15 2" stroke="#1a5ab0" stroke-width="1.4"/></svg>
<svg style="left:1147px;top:362px" width="16" height="16" viewBox="0 0 16 16"><rect x="1.5" y="3.5" width="13" height="10" fill="url(#gSq)" stroke="#111" stroke-width="1.2"/><rect x="6" y="1" width="4" height="3" fill="#1a5ab0"/></svg>
<svg style="left:1147px;top:384px" width="16" height="16" viewBox="0 0 16 16"><path d="M5 2.5H1.5v11h13v-11H11" fill="url(#gSq)" stroke="#111" stroke-width="1.2"/><rect x="3" y="1" width="3" height="3" fill="#1a5ab0"/><rect x="10" y="1" width="3" height="3" fill="#1a5ab0"/></svg>
<svg style="left:1147px;top:406px" width="16" height="16" viewBox="0 0 16 16"><path d="M0 8h16" stroke="#111" stroke-width="1.6"/><path d="M8 8L4 4v8zM8 8l4-4v8z" fill="#1a3f80"/></svg>
<svg style="left:1147px;top:428px" width="16" height="16" viewBox="0 0 16 16"><path d="M1.5 16V7.5M8 0.8h8" stroke="#111" stroke-width="1.3"/><path d="M1.5 7.5V0.8H8" stroke="#111" stroke-width="1" stroke-dasharray="1 1" fill="none"/><path d="M1.5 7.5L8 0.8" stroke="#1a5ad0" stroke-width="1.4"/></svg>
<svg style="left:1147px;top:450px" width="16" height="16" viewBox="0 0 16 16"><path d="M1.5 16V8M9 0.8h7" stroke="#111" stroke-width="1.3"/><path d="M1.5 8V0.8H9" stroke="#111" stroke-width="1" stroke-dasharray="1 1" fill="none"/><path d="M1.5 8C1.5 3.5 4.5 0.8 9 0.8" stroke="#1a5ad0" stroke-width="1.5" fill="none"/></svg>
<svg style="left:1147px;top:472px" width="16" height="16" viewBox="0 0 16 16"><path d="M2 13l8-8 2 2-8 8z" fill="#d82020" stroke="#801010" stroke-width="0.6"/><path d="M1 9l2 1 0-2 1 2 2-1-1 2 2 1-2 1 1 2-2-1-1 2-1-2-2 1 1-2z" fill="#f8e020" stroke="#c08000" stroke-width="0.5"/><path d="M11 2l1 2 2-1-1 2 2 1-2 1 1 2-2-1" stroke="#8aa0c0" stroke-width="0.8" fill="none"/></svg>
<svg style="left:1147px;top:512px" width="16" height="16" viewBox="0 0 16 16"><rect x="0.5" y="0.5" width="8" height="6" fill="url(#gSq)" stroke="#3a64a0"/><rect x="7.5" y="9.5" width="8" height="6" fill="url(#gSq)" stroke="#3a64a0"/><rect x="3.5" y="3.5" width="9" height="9" fill="#4a78b0" stroke="#1f4a88"/></svg>
<svg style="left:1147px;top:534px" width="16" height="16" viewBox="0 0 16 16"><rect x="3.5" y="3.5" width="9" height="9" fill="#4a78b0" stroke="#1f4a88"/><rect x="0.5" y="0.5" width="8" height="6" fill="url(#gSq)" stroke="#3a64a0"/><rect x="7.5" y="9.5" width="8" height="6" fill="url(#gSq)" stroke="#3a64a0"/></svg>
<svg style="left:1147px;top:556px" width="16" height="16" viewBox="0 0 16 16"><rect x="3.5" y="4.5" width="12" height="11" fill="url(#gSq)" stroke="#3a64a0"/><rect x="0.5" y="0.5" width="12" height="10" fill="#4a78b0" stroke="#1f4a88"/></svg>
<svg style="left:1147px;top:578px" width="16" height="16" viewBox="0 0 16 16"><rect x="0.5" y="0.5" width="12" height="10" fill="#4a78b0" stroke="#1f4a88"/><rect x="3.5" y="4.5" width="12" height="11" fill="url(#gSq)" stroke="#3a64a0"/></svg>
</body></html>
